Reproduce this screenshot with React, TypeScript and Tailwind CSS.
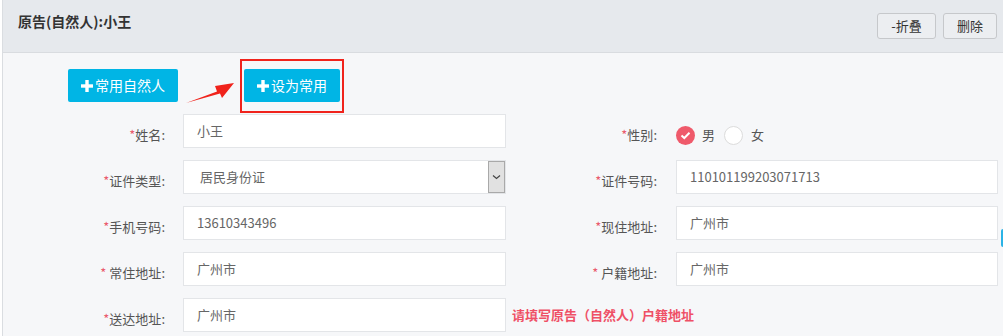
import React from "react";

const font = { fontFamily: '"Noto Sans CJK SC", "Noto Sans", sans-serif' };

function Label({ text, space }: { text: string; space?: boolean }) {
  return (
    <div className="w-full pt-[7px] text-right text-[13px] text-[#555]">
      <span className="text-[#ea5b6c]">*</span>
      {space ? " " : ""}
      {text}:
    </div>
  );
}

function Input({ value, select }: { value: string; select?: boolean }) {
  return (
    <div className="relative flex h-[34px] w-full items-center border border-[#e3e5e8] bg-white pl-[13px] text-[13px] text-[#666]">
      <span className={select ? "pl-[3px]" : ""}>{value}</span>
      {select && (
        <div className="absolute right-0 top-0 flex h-[32px] w-[17px] items-center justify-center border border-[#a9a9a9] bg-[#e1e1e1]">
          <svg width="9" height="6" viewBox="0 0 9 6">
            <path d="M1 1.5 L4.5 4.5 L8 1.5" fill="none" stroke="#444" strokeWidth="1.2" />
          </svg>
        </div>
      )}
    </div>
  );
}

function Plus() {
  return (
    <svg width="12" height="12" viewBox="0 0 12 12" className="mr-[2px]">
      <rect x="4.3" y="0" width="3.4" height="12" fill="white" />
      <rect x="0" y="4.3" width="12" height="3.4" fill="white" />
    </svg>
  );
}

function Row({ children }: { children: React.ReactNode }) {
  return <div className="flex h-[34px] items-center">{children}</div>;
}

export default function App() {
  return (
    <div style={font} className="relative h-[336px] w-[1003px] overflow-hidden bg-white">
      <div className="ml-[2px] h-full border-l border-[#dadde1] bg-[#f6f7f9]">
        <div className="flex h-[53px] items-start justify-between border-b border-[#d9dce0] bg-[#e6e9ed] pl-[15px] pr-[6px]">
          <div className="mt-[11px] text-[14px] font-bold text-[#333]">原告(自然人):小王</div>
          <div className="mt-[13px] flex gap-[7px]">
            <div className="flex h-[26px] w-[59px] items-center justify-center rounded-[3px] border border-[#c6c8cb] bg-[#eceef1] text-[13px] text-[#333]">
              -折叠
            </div>
            <div className="flex h-[26px] w-[54px] items-center justify-center rounded-[3px] border border-[#c6c8cb] bg-[#eceef1] text-[13px] text-[#333]">
              删除
            </div>
          </div>
        </div>

        <div className="flex items-start pl-[65px] pt-[6px]">
          <div className="mt-[10px] flex h-[33px] w-[110px] items-center justify-center rounded-[2px] bg-[#00b5e5] text-[14px] text-white">
            <Plus />
            常用自然人
          </div>
          <svg width="50" height="24" viewBox="0 0 50 24" className="ml-[7px] mt-[22px]">
            <path d="M1 22 L32 10.5 L30 5 L49 2 L37 17 L35 12.5 Z" fill="#f0231c" />
          </svg>
          <div className="ml-[5px] border-2 border-[#f0231c] px-[2px] pb-[9px] pt-[8px]">
            <div className="flex h-[33px] w-[96px] items-center justify-center rounded-[2px] bg-[#00b5e5] text-[14px] text-white">
              <Plus />
              设为常用
            </div>
          </div>
        </div>

        <div className="mt-[1px] flex flex-col gap-[12px]">
          <Row>
            <div className="w-[162px]"><Label text="姓名" /></div>
            <div className="ml-[18px] w-[323px]"><Input value="小王" /></div>
            <div className="w-[151px]"><Label text="性别" /></div>
            <div className="ml-[19px] mt-[8px] flex items-center text-[13px] text-[#555]">
              <div className="flex h-[19px] w-[19px] items-center justify-center rounded-full bg-[#ef5a6b]">
                <svg width="11" height="9" viewBox="0 0 11 9">
                  <path d="M1.5 4.5 L4.3 7 L9.5 1.8" fill="none" stroke="white" strokeWidth="2" />
                </svg>
              </div>
              <span className="ml-[7px]">男</span>
              <div className="ml-[9px] h-[19px] w-[19px] rounded-full border border-[#dcdcdc] bg-white" />
              <span className="ml-[8px]">女</span>
            </div>
          </Row>
          <Row>
            <div className="w-[162px]"><Label text="证件类型" /></div>
            <div className="ml-[18px] w-[323px]"><Input value="居民身份证" select /></div>
            <div className="w-[151px]"><Label text="证件号码" /></div>
            <div className="ml-[19px] w-[322px]"><Input value="110101199203071713" /></div>
          </Row>
          <Row>
            <div className="w-[162px]"><Label text="手机号码" /></div>
            <div className="ml-[18px] w-[323px]"><Input value="13610343496" /></div>
            <div className="w-[151px]"><Label text="现住地址" /></div>
            <div className="ml-[19px] w-[322px]"><Input value="广州市" /></div>
          </Row>
          <Row>
            <div className="w-[162px]"><Label text="常住地址" space /></div>
            <div className="ml-[18px] w-[323px]"><Input value="广州市" /></div>
            <div className="w-[151px]"><Label text="户籍地址" space /></div>
            <div className="ml-[19px] w-[322px]"><Input value="广州市" /></div>
          </Row>
          <Row>
            <div className="w-[162px]"><Label text="送达地址" /></div>
            <div className="ml-[18px] w-[323px]"><Input value="广州市" /></div>
            <div className="ml-[6px] text-[13px] font-bold text-[#ef5066]">请填写原告（自然人）户籍地址</div>
          </Row>
        </div>
      </div>
      <div className="absolute right-0 top-[229px] h-[18px] w-[2px] rounded-l-[2px] bg-[#2ab3e6]" />
    </div>
  );
}
